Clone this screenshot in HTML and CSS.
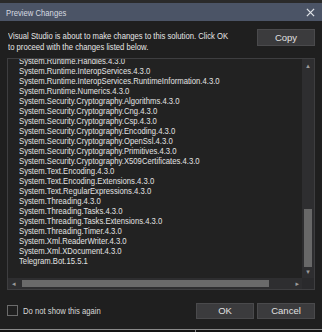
FILE: index.html
```html
<!DOCTYPE html>
<html lang="en">
<head>
  <meta charset="UTF-8">
  <title>Preview Changes</title>
  <link rel="stylesheet" href="styles.css">
</head>
<body>

<div class="dialog">
  <div class="top-strip"></div>
  <div class="titlebar">
    <span class="title squeeze">Preview Changes</span>
    <span class="close">
      <svg width="9" height="9" viewBox="0 0 10 10"><path d="M1 1 L9 9 M9 1 L1 9" stroke="#dfe3e8" stroke-width="1.4"/></svg>
    </span>
  </div>

  <div class="content">
    <div class="intro">
      <div class="message">
        <p class="squeeze">Visual Studio is about to make changes to this solution. Click OK to proceed with the changes listed below.</p>
      </div>
      <button class="btn copy-btn">Copy</button>
    </div>

    <div class="listbox">
      <div class="items">
        <ul class="squeeze">
          <li>System.Runtime.Handles.4.3.0</li>
          <li>System.Runtime.InteropServices.4.3.0</li>
          <li>System.Runtime.InteropServices.RuntimeInformation.4.3.0</li>
          <li>System.Runtime.Numerics.4.3.0</li>
          <li>System.Security.Cryptography.Algorithms.4.3.0</li>
          <li>System.Security.Cryptography.Cng.4.3.0</li>
          <li>System.Security.Cryptography.Csp.4.3.0</li>
          <li>System.Security.Cryptography.Encoding.4.3.0</li>
          <li>System.Security.Cryptography.OpenSsl.4.3.0</li>
          <li>System.Security.Cryptography.Primitives.4.3.0</li>
          <li>System.Security.Cryptography.X509Certificates.4.3.0</li>
          <li>System.Text.Encoding.4.3.0</li>
          <li>System.Text.Encoding.Extensions.4.3.0</li>
          <li>System.Text.RegularExpressions.4.3.0</li>
          <li>System.Threading.4.3.0</li>
          <li>System.Threading.Tasks.4.3.0</li>
          <li>System.Threading.Tasks.Extensions.4.3.0</li>
          <li>System.Threading.Timer.4.3.0</li>
          <li>System.Xml.ReaderWriter.4.3.0</li>
          <li>System.Xml.XDocument.4.3.0</li>
          <li>Telegram.Bot.15.5.1</li>
        </ul>
      </div>
      <div class="vscroll">
        <span class="arrow">&#9652;</span>
        <div class="vtrack"><div class="vthumb"></div></div>
        <span class="arrow">&#9662;</span>
      </div>
      <div class="hscroll">
        <span class="arrow">&#9666;</span>
        <div class="htrack"><div class="hthumb"></div></div>
        <span class="arrow">&#9656;</span>
      </div>
      <div class="corner"></div>
    </div>

    <div class="footer">
      <label class="check">
        <span class="box"></span>
        <span class="squeeze">Do not show this again</span>
      </label>
      <div class="buttons">
        <button class="btn">OK</button>
        <button class="btn">Cancel</button>
      </div>
    </div>
  </div>

  <div class="bottom-edge">
    <span class="tick"></span>
  </div>
</div>

</body>
</html>
```

FILE: styles.css
```css
* {
  box-sizing: border-box;
  margin: 0;
  padding: 0;
}

body {
  background: #1c1c1c;
  font-family: 'Liberation Sans', Arial, sans-serif;
  color: #dcdcdc;
}

/* the reference text is narrower than any installed face */
.squeeze {
  display: inline-block;
  transform: scaleX(0.81);
  transform-origin: 0 0;
}

.dialog {
  width: 322px;
  height: 332px;
  background: #1f1f1f;
  display: flex;
  flex-direction: column;
}

.top-strip {
  height: 3px;
  background: #2a2a2a;
}

.titlebar {
  height: 18px;
  background: #4b5466;
  display: flex;
  align-items: center;
  justify-content: space-between;
  padding: 0 6px;
}

.title {
  font-size: 9.5px;
  color: #d6dae0;
}

.close {
  display: flex;
  margin-right: 1px;
}

.content {
  flex: 1;
  padding: 0 7px;
  display: flex;
  flex-direction: column;
}

.intro {
  display: flex;
  justify-content: space-between;
  align-items: flex-start;
  height: 37px;
  padding-top: 9px;
}

.message {
  width: 236px;
  padding-left: 1px;
}

.message p {
  width: 280px;
  font-size: 9.5px;
  line-height: 11px;
  color: #e6e6e6;
}

.btn {
  font-family: inherit;
  font-size: 9.5px;
  color: #e0e0e0;
  background: #3b3b3d;
  border: 1px solid #4a4a4c;
  height: 16px;
  width: 58px;
  cursor: pointer;
}

.copy-btn {
  height: 17px;
  margin-top: -1px;
}

.listbox {
  height: 232px;
  border: 1px solid #3e3e40;
  background: #222222;
  display: grid;
  grid-template-columns: 1fr 12px;
  grid-template-rows: 1fr 11px;
}

.items {
  overflow: hidden;
  padding-left: 11px;
}

.items ul {
  list-style: none;
  margin-top: -3px;
}

.items li {
  font-size: 9.5px;
  line-height: 10px;
  white-space: nowrap;
  color: #e2e2e2;
}

.vscroll {
  background: #2e2e30;
  display: flex;
  flex-direction: column;
  align-items: center;
  padding: 3px 0 2px;
}

.arrow {
  font-family: 'DejaVu Sans', sans-serif;
  font-size: 7px;
  line-height: 8px;
  color: #9a9a9a;
}

.vtrack {
  flex: 1;
  width: 100%;
  display: flex;
  flex-direction: column;
  justify-content: flex-end;
  padding: 0 2px 1px;
}

.vthumb {
  height: 58px;
  background: #686868;
}

.hscroll {
  background: #2e2e30;
  display: flex;
  align-items: center;
  padding: 0 3px 0 4px;
}

.htrack {
  flex: 1;
  height: 100%;
  padding: 2px 26px 2px 6px;
}

.hthumb {
  height: 100%;
  background: #6a6a6a;
}

.corner {
  background: #2a2a2c;
}

.footer {
  flex: 1;
  display: flex;
  align-items: center;
  justify-content: space-between;
  padding-top: 2px;
}

.check {
  display: flex;
  align-items: center;
  gap: 5px;
  font-size: 9.5px;
  color: #d8d8d8;
}

.box {
  width: 11px;
  height: 11px;
  border: 1px solid #6b6b6b;
  background: #1f1f1f;
}

.buttons {
  display: flex;
  gap: 3px;
}

.bottom-edge {
  height: 3px;
  border-top: 1px solid #8a8a8a;
  background: #141414;
  padding-left: 195px;
}

.tick {
  display: block;
  width: 1px;
  height: 2px;
  background: #8a8a8a;
}
```
